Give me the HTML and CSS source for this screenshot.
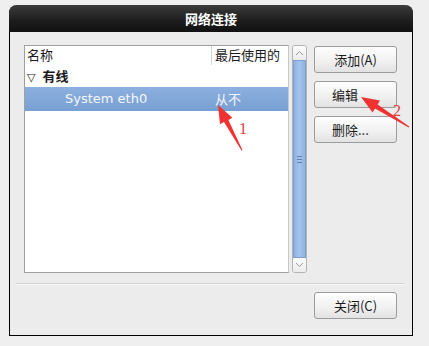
FILE: index.html
```html
<!DOCTYPE html>
<html lang="zh-CN">
<head>
    <meta charset="UTF-8">
    <title>网络连接</title>
    <link rel="stylesheet" href="styles.css">
</head>
<body>
    <div class="dialog">
        <div class="titlebar">网络连接</div>
        <div class="dialog-body">
            <div class="main">
                <div class="list">
                    <div class="list-header">
                        <div class="col-name">名称</div>
                        <div class="col-last">最后使用的</div>
                    </div>
                    <div class="group-row"><span class="expander">▽</span>有线</div>
                    <div class="item-row selected">
                        <div class="col-name item-name">System eth0</div>
                        <div class="col-last">从不</div>
                    </div>
                </div>
                <div class="scrollbar">
                    <div class="scroll-btn">
                        <svg width="9" height="6" viewBox="0 0 9 6"><path d="M1 5 L4.5 1.5 L8 5" fill="none" stroke="#9a9a9a" stroke-width="1"/></svg>
                    </div>
                    <div class="scroll-thumb"><span class="grip"></span></div>
                    <div class="scroll-btn">
                        <svg width="9" height="6" viewBox="0 0 9 6"><path d="M1 1 L4.5 4.5 L8 1" fill="none" stroke="#9a9a9a" stroke-width="1"/></svg>
                    </div>
                </div>
                <div class="buttons">
                    <button class="btn">添加(A)</button>
                    <button class="btn btn-left">编辑</button>
                    <button class="btn btn-left">删除...</button>
                </div>
            </div>
            <div class="separator"></div>
            <div class="footer">
                <button class="btn">关闭(C)</button>
            </div>
        </div>
    </div>

    <!-- annotation arrows -->
    <svg class="marks" width="429" height="346" viewBox="0 0 429 346">
        <polygon points="218,105 232.4,117.8 228.4,119.9 242.4,150 241.5,150.4 224,122.1 220,124.2" fill="#f03232"/>
        <text x="239" y="134" class="mark-num">1</text>
        <polygon points="361,97 380,100.6 377.6,104.4 409.3,126.6 408.7,127.4 375,108.6 372.6,112.4" fill="#f03232"/>
        <text x="393" y="116" class="mark-num">2</text>
    </svg>
</body>
</html>
```

FILE: styles.css
```css
* {
    box-sizing: border-box;
}
body {
    margin: 0;
    background-color: #efefef;
    font-family: "DejaVu Sans", "Noto Sans CJK SC", sans-serif;
    font-size: 13px;
    color: #1a1a1a;
    position: relative;
    width: 429px;
    height: 346px;
    overflow: hidden;
}
.dialog {
    margin: 5px 0 0 9px;
    width: 404px;
    height: 331px;
    background-color: #ececec;
    border: 1px solid #000;
    border-top: none;
    border-radius: 8px 8px 0 0;
}
.titlebar {
    height: 27px;
    line-height: 27px;
    border-radius: 8px 8px 0 0;
    margin: 0 -1px;
    background: linear-gradient(#3c3c3c, #1c1c1c 60%, #111);
    color: #fff;
    font-family: "Noto Sans CJK SC", sans-serif;
    font-weight: bold;
    font-size: 13px;
    text-align: center;
}
.dialog-body {
    padding: 13px 15px 0 14px;
}
.main {
    display: flex;
    align-items: flex-start;
}
.list {
    width: 266px;
    height: 228px;
    background: #fff;
    border: 1px solid #a0a0a0;
    border-right-color: #c8c8c8;
    font-family: "Noto Sans CJK SC", sans-serif;
}
.list-header {
    display: flex;
    height: 19px;
    line-height: 18px;
}
.col-name {
    flex: 1;
    padding-left: 2px;
}
.col-last {
    width: 77px;
    padding-left: 3px;
    border-left: 1px solid #d4d4d4;
}
.group-row {
    height: 22px;
    line-height: 22px;
    font-weight: bold;
    padding-left: 2px;
}
.expander {
    font-weight: normal;
    font-size: 11px;
    margin-right: 7px;
    font-family: "DejaVu Sans", sans-serif;
}
.item-row {
    display: flex;
    height: 24px;
    line-height: 24px;
}
.item-row .col-last {
    border-left: 1px solid transparent;
}
.item-name {
    padding-left: 40px;
    font-family: "DejaVu Sans", sans-serif;
}
.selected {
    background: linear-gradient(#8cb0de, #789fd2);
    color: #f4f8ff;
}
.scrollbar {
    margin-left: 3px;
    width: 15px;
    height: 228px;
    display: flex;
    flex-direction: column;
    border: 1px solid #b4b4b4;
    border-radius: 3px;
    background: #e4e4e4;
}
.scroll-btn {
    height: 14px;
    display: flex;
    align-items: center;
    justify-content: center;
    background: linear-gradient(#fdfdfd, #ebebeb);
    border-radius: 2px;
}
.scroll-thumb {
    flex: 1;
    background: linear-gradient(90deg, #8eb1e1, #a6c3ec 50%, #8eb1e1);
    border: 1px solid #7f9fcc;
    display: flex;
    align-items: center;
    justify-content: center;
}
.grip {
    width: 5px;
    height: 7px;
    border-top: 1px solid #5e7fae;
    border-bottom: 1px solid #5e7fae;
    position: relative;
}
.grip::after {
    content: "";
    position: absolute;
    left: 0;
    right: 0;
    top: 2px;
    border-top: 1px solid #5e7fae;
}
.buttons {
    margin-left: 7px;
    margin-top: 1px;
    display: flex;
    flex-direction: column;
    gap: 8px;
}
.btn {
    width: 83px;
    height: 27px;
    border: 1px solid #9c9c9c;
    border-radius: 3px;
    background: linear-gradient(#fefefe, #f0f0f0 60%, #e2e2e2);
    font-family: "Noto Sans CJK SC", sans-serif;
    font-size: 13px;
    color: #1a1a1a;
    padding: 0;
}
.btn-left {
    text-align: left;
    padding-left: 17px;
}
.separator {
    margin: 10px -7px 0 -8px;
    border-top: 1px solid #d2d2d2;
    border-bottom: 1px solid #fafafa;
}
.footer {
    display: flex;
    justify-content: flex-end;
    margin-top: 7px;
}
.marks {
    position: absolute;
    left: 0;
    top: 0;
    pointer-events: none;
}
.mark-num {
    font-family: "Liberation Serif", serif;
    font-size: 16px;
    fill: #e03a3a;
}
```
